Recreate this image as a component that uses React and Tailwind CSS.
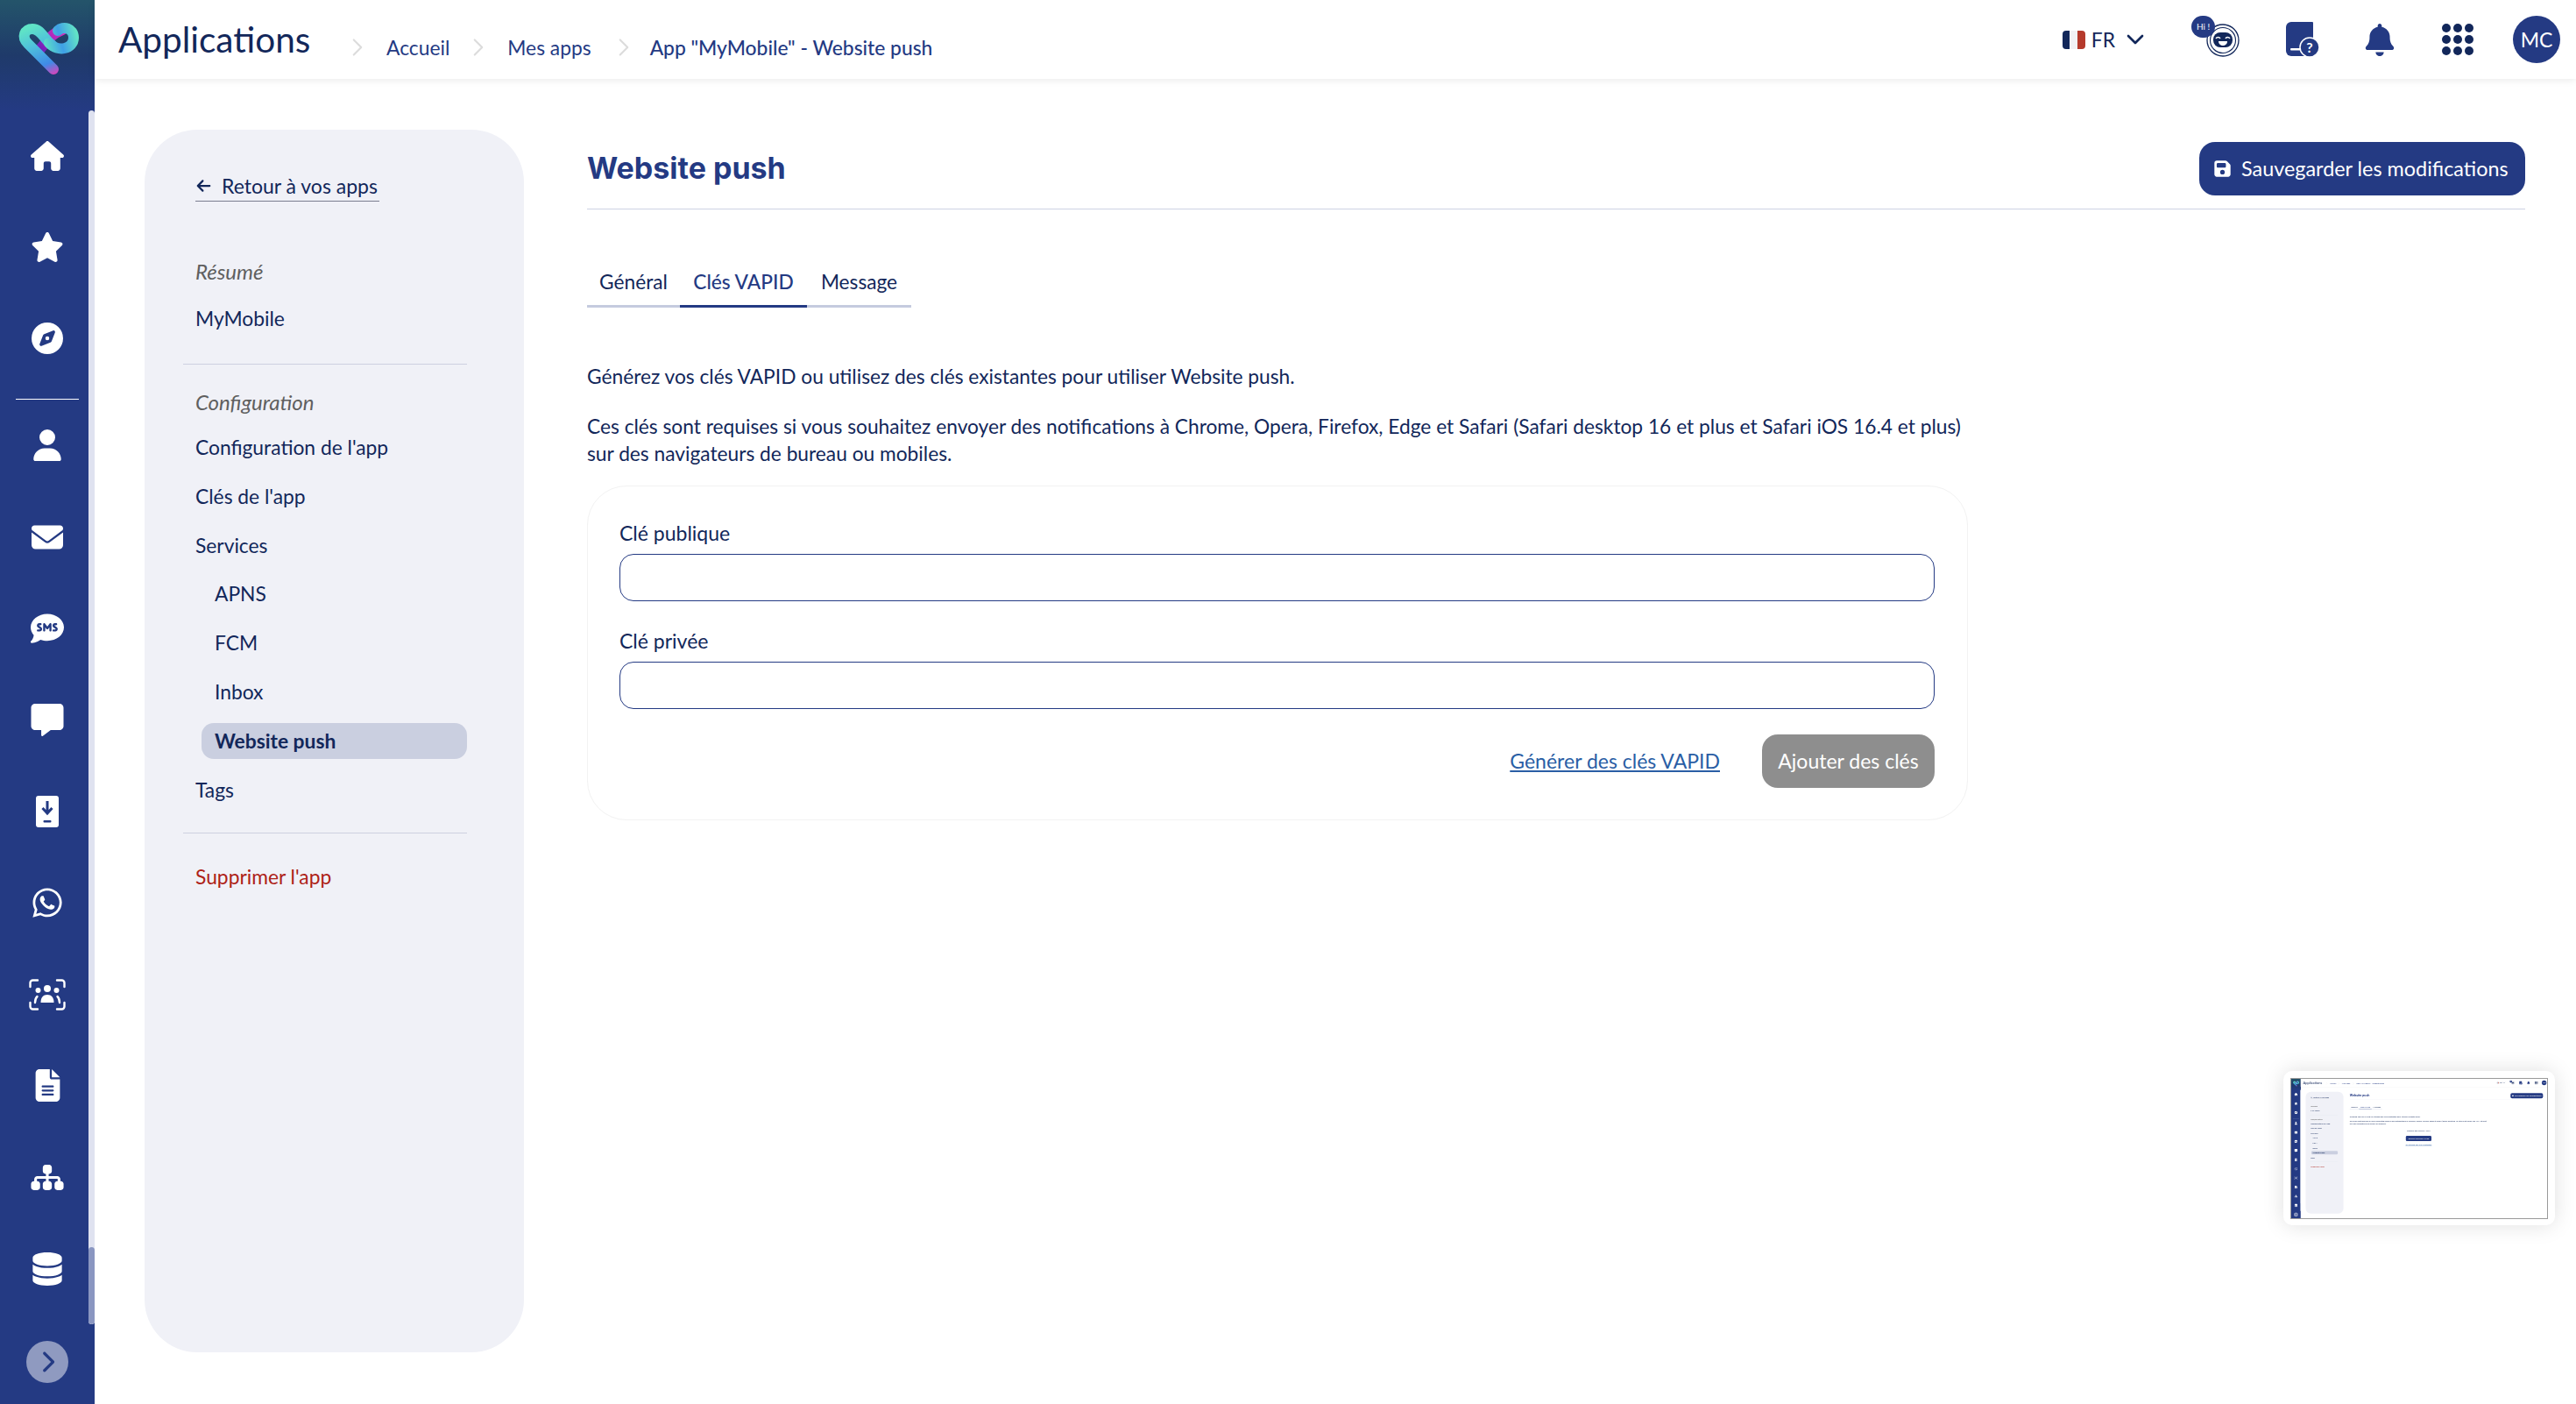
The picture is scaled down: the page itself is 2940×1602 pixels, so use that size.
import React from "react";
import { ChevronDown, ChevronRight } from "lucide-react";
import {
  FaHouse, FaStar, FaCompass, FaUser, FaEnvelope, FaCommentSms, FaMessage, FaWhatsapp,
  FaSitemap, FaDatabase, FaFileLines, FaFloppyDisk, FaBell, FaArrowLeft, FaChevronRight,
} from "react-icons/fa6";

function Logo({ id }) {
  return (
    <svg viewBox="0 0 108 108" className="w-[108px] h-[108px]">
      <defs>
        <linearGradient id={`${id}a`} gradientUnits="userSpaceOnUse" x1="38" y1="30" x2="62" y2="86">
          <stop offset="0" stopColor="#5fe3c6" />
          <stop offset="0.35" stopColor="#4fc0dc" />
          <stop offset="0.75" stopColor="#3f8ae6" />
          <stop offset="1" stopColor="#e040b8" />
        </linearGradient>
        <linearGradient id={`${id}b`} gradientUnits="userSpaceOnUse" x1="44" y1="56" x2="72" y2="32">
          <stop offset="0" stopColor="#6a20b8" />
          <stop offset="1" stopColor="#e030c0" />
        </linearGradient>
        <linearGradient id={`${id}c`} gradientUnits="userSpaceOnUse" x1="50" y1="50" x2="88" y2="40">
          <stop offset="0" stopColor="#5fe3c6" />
          <stop offset="0.5" stopColor="#3fa0e6" />
          <stop offset="1" stopColor="#62e3c6" />
        </linearGradient>
      </defs>
      <path d="M71 34 C60 38 54 46 46 56" fill="none" stroke={`url(#${id}b)`} strokeWidth="12" strokeLinecap="round" />
      <path d="M61 79 L32 50 C24 42 28 33 37 33 C47 33 50 45 60 52" fill="none" stroke={`url(#${id}a)`} strokeWidth="12" strokeLinecap="round" />
      <path d="M56 49 C66 60 84 56 84 43 C84 32 72 29 66 35" fill="none" stroke={`url(#${id}c)`} strokeWidth="12" strokeLinecap="round" />
    </svg>
  );
}

function PhoneDown({ className }) {
  return (
    <svg viewBox="0 0 26 36" className={className}>
      <rect x="0" y="0" width="26" height="36" rx="3" fill="#fff" />
      <path d="M13 6v13M7.500 14l5.500 6 5.500-6" stroke="#243a83" strokeWidth="3" fill="none" />
      <rect x="8.500" y="28" width="9" height="2.600" rx="1" fill="#243a83" />
    </svg>
  );
}

function Faces({ className }) {
  return (
    <svg viewBox="0 0 42 36" className={className} fill="none">
      <path d="M1.500 9V4.500a3 3 0 0 1 3-3H10M32 1.500h5.500a3 3 0 0 1 3 3V9M1.500 27v4.500a3 3 0 0 0 3 3H10M32 34.500h5.500a3 3 0 0 0 3-3V27" stroke="#fff" strokeWidth="2.400" strokeLinecap="round" />
      <circle cx="21" cy="11" r="4" fill="#fff" />
      <circle cx="10.500" cy="13" r="3" fill="#fff" />
      <circle cx="31.500" cy="13" r="3" fill="#fff" />
      <path d="M13.500 27c0-6 3-9 7.500-9s7.500 3 7.500 9z" fill="#fff" />
      <path d="M7 27c0-3 .8-5.500 2.500-7M35 27c0-3-.8-5.500-2.500-7" stroke="#fff" strokeWidth="2.400" strokeLinecap="round" />
    </svg>
  );
}

function Robot() {
  return (
    <div className="relative w-[56px] h-[46px]">
      <svg viewBox="0 0 42 38" className="absolute left-[15px] top-[9px] w-[42px] h-[38px]" fill="none">
        <circle cx="21" cy="19" r="18" stroke="#12275a" strokeWidth="1.300" />
        <circle cx="21" cy="19" r="14.500" stroke="#12275a" strokeWidth="1.100" />
        <rect x="10" y="10" width="22" height="17" rx="8" fill="#12275a" />
        <path d="M13 17c1-2 4-2 5 0M24 17c1-2 4-2 5 0" stroke="#fff" strokeWidth="1.400" />
        <path d="M16 20h10c0 3.500-2.500 5-5 5s-5-1.500-5-5z" fill="#fff" />
      </svg>
      <div className="absolute left-0 top-0 w-[27px] h-[25px] rounded-full bg-[#243a83] text-white text-[10px] leading-[25px] text-center">Hi !</div>
    </div>
  );
}

function HelpDoc() {
  return (
    <svg viewBox="0 0 38 40" className="w-[38px] h-[40px]">
      <path d="M6 0h24a1 1 0 0 1 1 1v38H6a6 6 0 0 1-6-6V6a6 6 0 0 1 6-6z" fill="#243a83" />
      <rect x="5" y="30" width="12" height="2.500" rx="1" fill="#fff" />
      <circle cx="27" cy="29" r="11" fill="#243a83" stroke="#fff" strokeWidth="1.500" />
      <text x="27" y="35" textAnchor="middle" fontSize="16" fontWeight="700" fill="#fff" fontFamily="Lato, sans-serif">?</text>
    </svg>
  );
}

function Flag() {
  return (
    <div className="flex w-[26px] h-[21px] rounded-[4px] overflow-hidden">
      <div className="flex-1 bg-[#12275a]" />
      <div className="flex-1 bg-[#f1f1f4]" />
      <div className="flex-1 bg-[#b53a2c]" />
    </div>
  );
}

function Grid() {
  return (
    <div className="grid grid-cols-3 gap-[3px] w-[36px]">
      {[0, 1, 2, 3, 4, 5, 6, 7, 8].map((i) => (
        <div key={i} className="w-[10px] h-[10px] rounded-full bg-[#12275a]" />
      ))}
    </div>
  );
}

const icon = "text-white w-[38px] h-[38px]";

function Rail({ id }) {
  const rows = [
    <FaUser className="text-white w-[32px] h-[36px]" />,
    <FaEnvelope className="text-white w-[38px] h-[36px]" />,
    <FaCommentSms className={icon} />,
    <FaMessage className="text-white w-[38px] h-[37px]" />,
    <PhoneDown className="w-[26px] h-[36px]" />,
    <FaWhatsapp className={icon} />,
    <Faces className="w-[42px] h-[36px]" />,
    <FaFileLines className="text-white w-[29px] h-[37px]" />,
    <FaSitemap className="text-white w-[38px] h-[33px]" />,
    <FaDatabase className="text-white w-[34px] h-[38px]" />,
  ];
  return (
    <aside className="relative w-[108px] shrink-0 h-full bg-[#243a83] flex flex-col">
      <div className="h-[126px] shrink-0 bg-gradient-to-b from-[#24546a] to-[#243a83] via-[#1f3a6a] flex justify-center">
        <div className="h-[108px]"><Logo id={id} /></div>
      </div>
      {[<FaHouse className="text-white w-[38px] h-[36px]" />, <FaStar className="text-white w-[38px] h-[36px]" />, <FaCompass className="text-white w-[36px] h-[36px]" />].map((n, i) => (
        <div key={i} className="h-[104px] flex items-center justify-center">{n}</div>
      ))}
      <div className="mt-[17px] mx-[18px] h-px bg-white shrink-0" />
      {rows.map((n, i) => (
        <div key={i} className="h-[104.4px] shrink-0 flex items-center justify-center">{n}</div>
      ))}
      <div className="mt-[30px] flex justify-center">
        <div className="w-[48px] h-[48px] rounded-full bg-[#8f9ac0] flex items-center justify-center">
          <FaChevronRight className="text-[#243a83] w-[26px] h-[26px]" />
        </div>
      </div>
      <div className="absolute right-0 top-[126px] w-[7px] h-[1385px] rounded-[4px] bg-[#dfe2f0] overflow-hidden flex flex-col justify-end">
        <div className="h-[88px] bg-[#8a96c1] rounded-[4px]" />
      </div>
    </aside>
  );
}

function Header() {
  const Sep = () => <ChevronRight className="w-[34px] h-[34px] text-[#dcdcdc]" strokeWidth={1.500} />;
  return (
    <header className="relative z-10 h-[90px] shrink-0 bg-white shadow-[0_2px_8px_rgba(0,0,0,0.08)] flex items-center pl-[27px] pr-[18px]">
      <div className="text-[40.500px] leading-[48px] text-[#12275a] -mt-[1px] w-[256px]">Applications</div>
      <div className="flex items-center text-[22.800px] text-[#243a83] mt-[18px]">
        <Sep /><span className="ml-[16px] mr-[16px]">Accueil</span>
        <Sep /><span className="ml-[16px] mr-[20px]">Mes apps</span>
        <Sep /><span className="ml-[13px] font-medium">App "MyMobile" - Website push</span>
      </div>
      <div className="ml-auto flex items-center">
        <Flag />
        <span className="ml-[7px] text-[22.800px] text-[#12275a]">FR</span>
        <ChevronDown className="ml-[7px] w-[32px] h-[32px] text-[#12275a]" strokeWidth={2} />
        <div className="ml-[48px] -mt-[8px]"><Robot /></div>
        <div className="ml-[52px]"><HelpDoc /></div>
        <FaBell className="ml-[52px] w-[34px] h-[37px] text-[#243a83]" />
        <div className="ml-[54px]"><Grid /></div>
        <div className="ml-[45px] w-[54px] h-[54px] rounded-full bg-[#243a83] text-white text-[23px] flex items-center justify-center">MC</div>
      </div>
    </header>
  );
}

function NavRow({ children, sub, italic, className = "" }) {
  return (
    <div className={`h-[56px] flex items-center ${sub ? "pl-[22px]" : ""} ${italic ? "italic text-[#5f5f5f] text-[24px]" : "text-[#12275a]"} ${className}`}>{children}</div>
  );
}

function SidePanel() {
  return (
    <nav className="ml-[57px] mt-[58px] w-[433px] h-[1395px] shrink-0 rounded-[60px] bg-[#f0f1f7] pl-[58px] pr-[65px] pt-[47px] text-[22.800px]">
      <div className="flex">
        <div className="flex items-center h-[35px] border-b border-[#7a7d8f] text-[#12275a] w-[210px] text-[23px]">
          <FaArrowLeft className="w-[19px] h-[18px] mr-[11px]" />
          Retour à vos apps
        </div>
      </div>
      <NavRow italic className="mt-[52px]">Résumé</NavRow>
      <NavRow className="!h-[50px]">MyMobile</NavRow>
      <div className="-ml-[14px] mt-[27px] h-px bg-[#cdd0e0]" />
      <NavRow italic className="mt-[20px] !h-[46px]">Configuration</NavRow>
      <NavRow>Configuration de l'app</NavRow>
      <NavRow>Clés de l'app</NavRow>
      <NavRow>Services</NavRow>
      <NavRow sub className="-mt-[1px]">APNS</NavRow>
      <NavRow sub>FCM</NavRow>
      <NavRow sub>Inbox</NavRow>
      <div className="h-[56px] flex items-center">
        <div className="ml-[7px] pl-[15px] w-full h-[41px] rounded-[14px] bg-[#cacfe0] font-bold text-[#12275a] flex items-center">Website push</div>
      </div>
      <NavRow>Tags</NavRow>
      <div className="-ml-[14px] mt-[21px] h-px bg-[#cdd0e0]" />
      <NavRow className="mt-[21px] !text-[#ae2217]">Supprimer l'app</NavRow>
    </nav>
  );
}

function Tabs() {
  const base = "h-[54px] flex items-center justify-center text-[22.700px] border-b-[3px]";
  return (
    <div className="flex mt-[58px]">
      <div className={`${base} w-[106px] border-[#c5cbdf] text-[#12275a]`}>Général</div>
      <div className={`${base} w-[145px] border-[#243a83] text-[#243a83] font-medium`}>Clés VAPID</div>
      <div className={`${base} w-[119px] border-[#c5cbdf] text-[#12275a]`}>Message</div>
    </div>
  );
}

function KeysForm() {
  const input = "mt-[8px] block w-[1501px] h-[54px] rounded-[16px] border border-[#243a83] bg-white";
  return (
    <section className="mt-[21px] w-[1576px] h-[382px] rounded-[45px] border border-[#f2f2f2] pl-[36px] pt-[38px] text-[23px]">
      <label className="block leading-[31px] text-[#12275a]">Clé publique</label>
      <div className={input} />
      <label className="block mt-[30px] leading-[31px] text-[#12275a]">Clé privée</label>
      <div className={input} />
      <div className="mt-[29px] w-[1501px] flex items-center justify-end">
        <span className="underline text-[#2a5ea5]">Générer des clés VAPID</span>
        <div className="ml-[48px] w-[197px] h-[61px] rounded-[18px] bg-[#8e8e8e] text-white flex items-center justify-center">Ajouter des clés</div>
      </div>
    </section>
  );
}

function GenerateBlock() {
  return (
    <section className="mt-[45px] w-[1576px] flex flex-col items-center text-[23px] text-[#12275a]">
      <div>Générer des clés en 1 clic !</div>
      <div className="mt-[40px] w-[293px] h-[60px] rounded-[14px] bg-[#243a83] text-white flex items-center justify-center">Générer des clés VAPID</div>
      <div className="mt-[25px] underline text-[#2a5ea5]">Ou utilisez des clés existantes</div>
    </section>
  );
}

function Page({ mini }) {
  return (
    <div className="w-[2940px] h-[1602px] bg-white flex overflow-hidden font-['Lato','Noto_Sans',sans-serif]">
      <Rail id={mini ? "m" : "p"} />
      <div className="flex-1 min-w-0 flex flex-col">
        <Header />
        <div className="flex flex-1 min-h-0">
          <SidePanel />
          <main className="ml-[72px] w-[2212px]">
            <div className="pt-[72px] pb-[15px] border-b border-[#cdd2e4] flex items-center justify-between">
              <h1 className="-mt-[3px] text-[34px] font-bold text-[#243a83] font-['Inter',sans-serif]">Website push</h1>
              <div className="w-[372px] h-[61px] rounded-[18px] bg-[#243a83] text-white text-[23.400px] flex items-center pl-[16px]">
                <FaFloppyDisk className="w-[21px] h-[21px] mr-[11px]" />
                Sauvegarder les modifications
              </div>
            </div>
            <div className="inline-block"><Tabs /></div>
            <p className="mt-[63px] text-[22.740px] leading-[31px] text-[#12275a] whitespace-nowrap">Générez vos clés VAPID ou utilisez des clés existantes pour utiliser Website push.</p>
            <p className="mt-[26px] text-[22.740px] leading-[31px] text-[#12275a] whitespace-nowrap">
              Ces clés sont requises si vous souhaitez envoyer des notifications à Chrome, Opera, Firefox, Edge et Safari (Safari desktop 16 et plus et Safari iOS 16.4 et plus)
              <br />sur des navigateurs de bureau ou mobiles.
            </p>
            {mini ? <GenerateBlock /> : <KeysForm />}
          </main>
        </div>
      </div>
    </div>
  );
}

export default function App() {
  return (
    <div className="relative w-[2940px] h-[1602px] overflow-hidden">
      <Page />
      <div className="absolute left-[2606px] top-[1222px] w-[310px] h-[176px] rounded-[10px] bg-white shadow-[0_0_24px_rgba(0,0,0,0.13)] p-[8px]">
        <div className="w-[294px] h-[161px] border border-[#9a9a9a] overflow-hidden blur-[0.4px]">
          <div className="origin-top-left scale-[0.0997]"><Page mini /></div>
        </div>
      </div>
    </div>
  );
}
